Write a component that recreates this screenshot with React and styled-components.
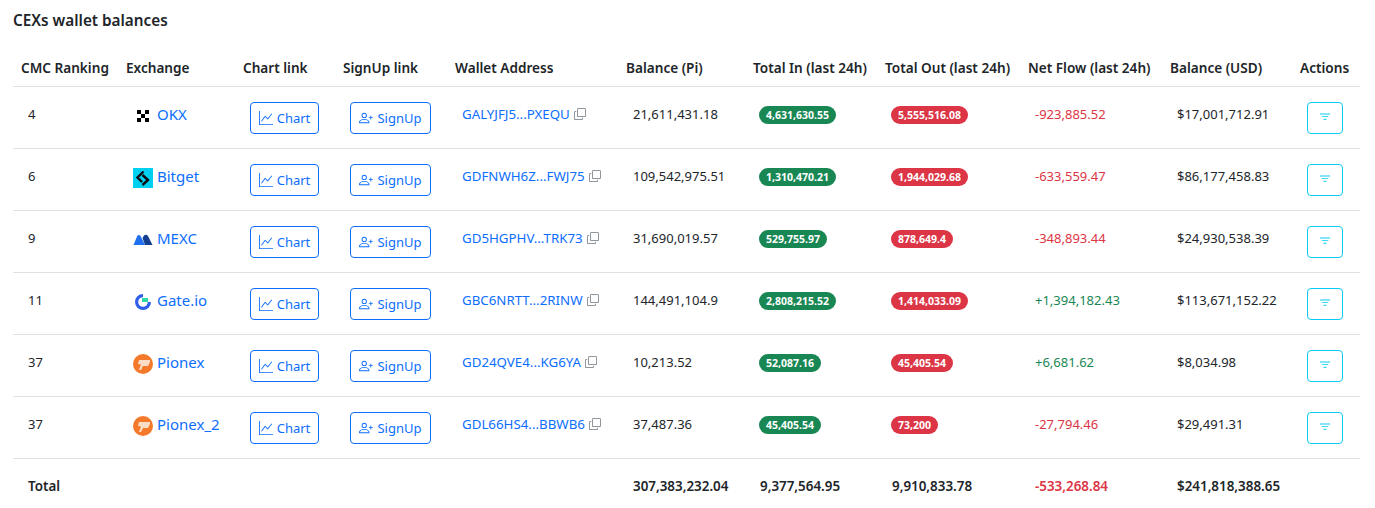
import React from 'react';
import styled, { createGlobalStyle } from 'styled-components';
import { BsGraphUp, BsPersonPlus, BsCopy, BsFilter } from 'react-icons/bs';

const GlobalStyle = createGlobalStyle`
  html, body {
    margin: 0;
    padding: 0;
    background: #fff;
    color: #212529;
    font-family: "Noto Sans", "Open Sans", sans-serif;
    font-size: 14px;
  }
`;

const exchanges = [
  { rank: 4, name: 'OKX', logo: 'okx', wallet: 'GALYJFJ5...PXEQU', balance: '21,611,431.18', inflow: '4,631,630.55', outflow: '5,555,516.08', net: '-923,885.52', usd: '$17,001,712.91' },
  { rank: 6, name: 'Bitget', logo: 'bitget', wallet: 'GDFNWH6Z...FWJ75', balance: '109,542,975.51', inflow: '1,310,470.21', outflow: '1,944,029.68', net: '-633,559.47', usd: '$86,177,458.83' },
  { rank: 9, name: 'MEXC', logo: 'mexc', wallet: 'GD5HGPHV...TRK73', balance: '31,690,019.57', inflow: '529,755.97', outflow: '878,649.4', net: '-348,893.44', usd: '$24,930,538.39' },
  { rank: 11, name: 'Gate.io', logo: 'gate', wallet: 'GBC6NRTT...2RINW', balance: '144,491,104.9', inflow: '2,808,215.52', outflow: '1,414,033.09', net: '+1,394,182.43', usd: '$113,671,152.22' },
  { rank: 37, name: 'Pionex', logo: 'pionex', wallet: 'GD24QVE4...KG6YA', balance: '10,213.52', inflow: '52,087.16', outflow: '45,405.54', net: '+6,681.62', usd: '$8,034.98' },
  { rank: 37, name: 'Pionex_2', logo: 'pionex', wallet: 'GDL66HS4...BBWB6', balance: '37,487.36', inflow: '45,405.54', outflow: '73,200', net: '-27,794.46', usd: '$29,491.31' },
];

const columns = [
  { label: 'CMC Ranking', width: 105 },
  { label: 'Exchange', width: 117 },
  { label: 'Chart link', width: 100 },
  { label: 'SignUp link', width: 112 },
  { label: 'Wallet Address', width: 171 },
  { label: 'Balance (Pi)', width: 127 },
  { label: 'Total In (last 24h)', width: 132 },
  { label: 'Total Out (last 24h)', width: 143 },
  { label: 'Net Flow (last 24h)', width: 142 },
  { label: 'Balance (USD)', width: 130 },
  { label: 'Actions', width: 68 },
];

const Page = styled.div`
  width: 1347px;
  padding: 10px 0 0 13px;
`;

const Title = styled.h2`
  margin: 0;
  font-size: 15.3px;
  line-height: 20px;
  font-weight: 600;
`;

const Table = styled.table`
  margin-top: 20px;
  width: 1347px;
  table-layout: fixed;
  border-collapse: collapse;
`;

const Th = styled.th`
  box-sizing: border-box;
  height: 36px;
  padding: 0 0 0 8px;
  text-align: left;
  font-size: 13.6px;
  font-weight: 600;
  white-space: nowrap;
  border-bottom: 1px solid #dee2e6;
`;

const Td = styled.td`
  box-sizing: border-box;
  height: 62px;
  padding: 17px 0 0 15px;
  vertical-align: top;
  font-size: 13px;
  line-height: 21px;
  white-space: nowrap;
  border-bottom: 1px solid #dee2e6;
  color: ${(p) => p.$color || '#212529'};
`;

const ButtonCell = styled(Td)`
  padding-top: 15px;
`;

const TotalCell = styled.td`
  box-sizing: border-box;
  height: 50px;
  padding: 6px 0 0 15px;
  font-size: 13.4px;
  font-weight: 600;
  white-space: nowrap;
  color: ${(p) => p.$color || '#212529'};
`;

const ExchangeLink = styled.a`
  display: inline-flex;
  align-items: center;
  gap: 4px;
  color: #0d6efd;
  font-size: 15px;
  line-height: 20px;
  text-decoration: none;
`;

const LogoBox = styled.svg`
  width: 20px;
  height: 20px;
  flex: none;
  transform: translateY(2px);
`;

const OutlineButton = styled.a`
  display: inline-flex;
  align-items: center;
  justify-content: center;
  gap: 4px;
  box-sizing: border-box;
  height: 32px;
  width: ${(p) => p.$width}px;
  padding-top: 1px;
  border: 1px solid #0d6efd;
  border-radius: 4px;
  color: #0d6efd;
  font-size: 13px;
  background: #fff;
  svg { flex: none; }
`;

const ActionButton = styled.a`
  display: inline-flex;
  align-items: center;
  justify-content: center;
  box-sizing: border-box;
  height: 32px;
  width: 36px;
  padding-bottom: 2px;
  border: 1px solid #0dcaf0;
  border-radius: 4px;
  color: #0dcaf0;
  background: #fff;
`;

const Wallet = styled.span`
  display: inline-flex;
  align-items: center;
  gap: 4px;
`;

const WalletLink = styled.a`
  color: #0d6efd;
  font-size: 13.3px;
  text-decoration: none;
`;

const CopyIcon = styled(BsCopy)`
  color: #6c757d;
  width: 12px;
  height: 12px;
`;

const Badge = styled.span`
  display: inline-block;
  margin: 2px 0 0 -1px;
  padding: 0 7px;
  height: 18px;
  line-height: 18px;
  border-radius: 9px;
  color: #fff;
  font-size: 10.5px;
  font-weight: 700;
  background: ${(p) => p.$bg};
`;

const netColor = (net) => (net.startsWith('+') ? '#198754' : '#dc3545');

function Logo({ kind }) {
  if (kind === 'okx') {
    return (
      <LogoBox viewBox="0 0 20 20">
        <path fill="#000" d="M4 4h4v4H4zM12 4h4v4h-4zM8 8h4v4H8zM4 12h4v4H4zM12 12h4v4h-4z" />
      </LogoBox>
    );
  }
  if (kind === 'bitget') {
    return (
      <LogoBox viewBox="0 0 20 20">
        <path fill="#00d0f0" d="M0 0h20v20H0z" />
        <path fill="none" stroke="#0a0a14" strokeWidth="2.4" d="M10.500 3.500 4.500 9.500 9 14M9.500 7 15 12l-5.500 5" />
      </LogoBox>
    );
  }
  if (kind === 'mexc') {
    return (
      <LogoBox viewBox="0 0 20 20">
        <path fill="#1f6ff0" d="M.5 15 4 6.500Q5.500 3.800 7.500 6L12 15z" />
        <path fill="#123f8f" d="M9.500 8 11 5.500Q13 3.800 15 6l4.500 9H12z" />
      </LogoBox>
    );
  }
  if (kind === 'gate') {
    return (
      <LogoBox viewBox="0 0 20 20">
        <path fill="none" stroke="#2f5fe8" strokeWidth="3.2" d="M10 3.600A6.400 6.400 0 1 0 16.400 10" />
        <path fill="#2fd8a8" d="M9 6h6v4H9z" />
      </LogoBox>
    );
  }
  return (
    <LogoBox viewBox="0 0 20 20">
      <circle cx="10" cy="10" r="10" fill="#f5792a" />
      <path fill="#fbdcc4" d="M6 6h11v2l-2 4h-5l-2 4H6l2-5.500L5 10z" />
    </LogoBox>
  );
}

export default function App() {
  return (
    <Page>
      <GlobalStyle />
      <Title>CEXs wallet balances</Title>
      <Table>
        <colgroup>
          {columns.map((c) => (
            <col key={c.label} width={c.width} />
          ))}
        </colgroup>
        <thead>
          <tr>
            {columns.map((c) => (
              <Th key={c.label}>{c.label}</Th>
            ))}
          </tr>
        </thead>
        <tbody>
          {exchanges.map((row) => (
            <tr key={row.name}>
              <Td>{row.rank}</Td>
              <Td>
                <ExchangeLink>
                  <Logo kind={row.logo} />
                  {row.name}
                </ExchangeLink>
              </Td>
              <ButtonCell>
                <OutlineButton $width={69}>
                  <BsGraphUp size={14} />
                  Chart
                </OutlineButton>
              </ButtonCell>
              <ButtonCell>
                <OutlineButton $width={81}>
                  <BsPersonPlus size={14} />
                  SignUp
                </OutlineButton>
              </ButtonCell>
              <Td>
                <Wallet>
                  <WalletLink>{row.wallet}</WalletLink>
                  <CopyIcon />
                </Wallet>
              </Td>
              <Td>{row.balance}</Td>
              <Td><Badge $bg="#198754">{row.inflow}</Badge></Td>
              <Td><Badge $bg="#dc3545">{row.outflow}</Badge></Td>
              <Td $color={netColor(row.net)}>{row.net}</Td>
              <Td>{row.usd}</Td>
              <ButtonCell>
                <ActionButton>
                  <BsFilter size={14} />
                </ActionButton>
              </ButtonCell>
            </tr>
          ))}
          <tr>
            <TotalCell>Total</TotalCell>
            <TotalCell colSpan={4} />
            <TotalCell>307,383,232.04</TotalCell>
            <TotalCell>9,377,564.95</TotalCell>
            <TotalCell>9,910,833.78</TotalCell>
            <TotalCell $color="#dc3545">-533,268.84</TotalCell>
            <TotalCell>$241,818,388.65</TotalCell>
            <TotalCell />
          </tr>
        </tbody>
      </Table>
    </Page>
  );
}
